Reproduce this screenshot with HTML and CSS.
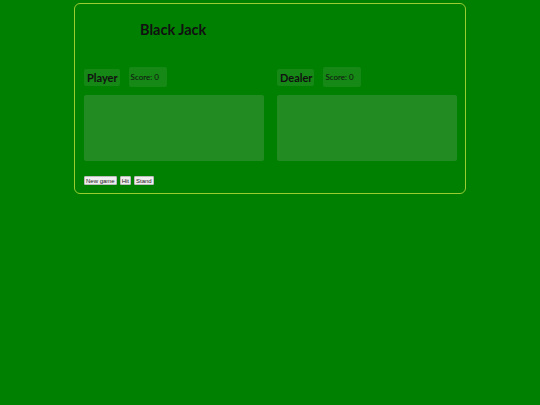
FILE: index.html
```html
<!DOCTYPE html>
<html>
<head>
<meta charset="utf-8">
<link rel="stylesheet" href="styles.css">
</head>
<body>
<div class="table">
  <h1 class="title">Black Jack</h1>
  <div class="hands">
    <div class="hand">
      <div class="hand-head">
        <div class="name">Player</div>
        <div class="score">Score: 0</div>
      </div>
      <div class="cards"></div>
    </div>
    <div class="hand">
      <div class="hand-head">
        <div class="name">Dealer</div>
        <div class="score">Score: 0</div>
      </div>
      <div class="cards"></div>
    </div>
  </div>
  <div class="controls">
    <button class="btn">New game</button>
    <button class="btn">Hit</button>
    <button class="btn">Stand</button>
  </div>
</div>
</body>
</html>
```
FILE: styles.css
```css
html, body {
  margin: 0;
  padding: 0;
  background: #008000;
  font-family: "Lato", "DejaVu Sans", sans-serif;
  color: #111;
}
.table {
  box-sizing: border-box;
  width: 392px;
  height: 191px;
  margin: 3px auto 0;
  border: 1px solid #9acd32;
  border-radius: 6px;
  padding: 0 8px 0 9px;
}
.title {
  margin: 0;
  padding: 17px 0 0 56px;
  font-size: 14.5px;
  line-height: 18px;
  font-weight: 700;
  height: 46px;
}
.hands {
  display: grid;
  grid-template-columns: 180px 180px;
  column-gap: 13px;
}
.hand-head {
  display: flex;
  align-items: center;
  height: 20px;
}
.name {
  background: #158815;
  border-radius: 2px;
  height: 17px;
  line-height: 17px;
  padding: 0 2px 0 3px;
  font-size: 11px;
  font-weight: 700;
  margin-right: 9px;
}
.score {
  background: #158815;
  border-radius: 2px;
  height: 20px;
  line-height: 20px;
  width: 38px;
  box-sizing: border-box;
  padding-left: 2px;
  font-size: 8px;
}
.cards {
  margin-top: 8px;
  height: 66px;
  background: #228b22;
  border-radius: 2px;
}
.controls {
  display: flex;
  gap: 3px;
  margin-top: 15px;
}
.btn {
  font-family: "Liberation Sans", Arial, sans-serif;
  font-size: 6px;
  height: 9px;
  line-height: 6px;
  padding: 0 1px;
  border: 1px solid #bbb;
  background: #efefef;
  color: #222;
  border-radius: 1px;
}
```
